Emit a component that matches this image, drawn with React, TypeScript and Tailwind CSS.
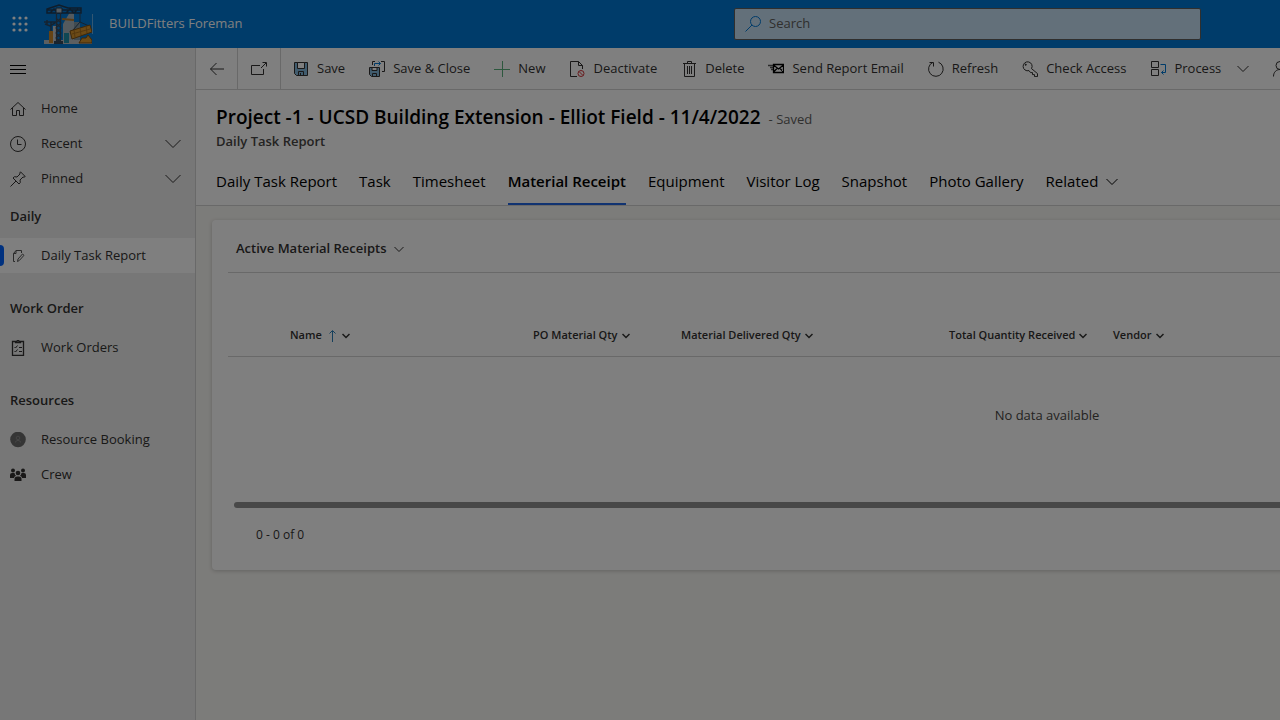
import type { ReactNode } from "react";
import clsx from "clsx";

function Icon({ size = 16, children }: { size?: number; children: ReactNode }) {
  return (
    <svg
      width={size}
      height={size}
      viewBox="0 0 16 16"
      fill="none"
      stroke="currentColor"
      strokeWidth={1}
      className="shrink-0"
      aria-hidden="true"
    >
      {children}
    </svg>
  );
}

function Chevron({ width = 12, stroke = 1 }: { width?: number; stroke?: number }) {
  return (
    <svg
      width={width}
      height={width / 2 + 2}
      viewBox={`0 0 ${width} ${width / 2 + 2}`}
      fill="none"
      stroke="currentColor"
      strokeWidth={stroke}
      className="shrink-0"
      aria-hidden="true"
    >
      <path d={`M.5 1 ${width / 2} ${width / 2 + 0.5} ${width - 0.5} 1`} />
    </svg>
  );
}

function Logo() {
  return (
    <svg width="48" height="40" viewBox="0 0 48 40" className="shrink-0" aria-hidden="true">
      <path d="M19 20l7-12 4 2v30H19z" fill="#a9b4bc" />
      <path d="M30 18h6v22h-6z" fill="#8296a3" />
      <path d="M0 36h48v4H0z" fill="#b9bec2" />
      <path d="M5 27h4v12H5z" fill="#c9862a" />
      <path d="M9 22h3v17H9z" fill="#c5c9cc" />
      <path d="M20 29h5v10h-5z" fill="#1f8fa8" />
      <path d="M18 15l12 1" stroke="#b87a2b" strokeWidth="2" />
      <path
        d="M3 6h34M6 4l9-3 9 3h13v5H3V5zM6 9l4-4 4 4M22 9l4-4 4 4 4-4"
        fill="none"
        stroke="#1e3a55"
        strokeWidth="1.5"
      />
      <path d="M12 4h6v5h-6z" fill="#a9b7c2" stroke="#1e3a55" />
      <path
        d="M12.500 9v29M16.500 9v29M12 14l5 5-5 5 5 5-5 5 5 4M17 14l-5 5 5 5-5 5 5 5-5 4"
        fill="none"
        stroke="#35495c"
        strokeWidth="1.200"
      />
      <path d="M10 37h9v3h-9z" fill="#35495c" />
      <path d="M0 18h12M3 16v5M7 18v9M1 20l5 2 5-3" fill="none" stroke="#2b4660" strokeWidth="1.500" />
      <path d="M36 9v9l-7 8M36 18l9 4" fill="none" stroke="#2b4660" />
      <path d="M26 27l20-6 2 7-20 7z" fill="#d8942c" stroke="#7d4f12" />
      <path d="M28 30l18-5M30 26l1 7M36 24l1 7M42 22l1 7" stroke="#a86f1e" />
      <path d="M35 39l3-5h4l2-3 4 5v3z" fill="#d8942c" stroke="#7d4f12" />
    </svg>
  );
}

const commands: { label: string; icon: ReactNode; menu?: boolean }[] = [
  {
    label: "Save",
    icon: (
      <Icon>
        <path d="M1.500 1.500h13v13h-11l-2-2z" fill="#83b9dc" />
        <path d="M4.500 1.500h7v6h-7z" fill="#fff" />
        <path d="M5.500 14.500v-4h5v4M7.500 12v2" fill="none" />
      </Icon>
    ),
  },
  {
    label: "Save & Close",
    icon: (
      <Icon>
        <path d="M.5 6.500h10v9h-8l-2-2z" fill="#83b9dc" />
        <path d="M3 6.500h5v3H3z" fill="#fff" />
        <path d="M3.500 15.500v-3h4v3M3.500 4V.5H6M12 .5h3.500v10H13" />
        <path d="M5.500 5V2.500h6M9.500.5l2 2-2 2" stroke="#0078d4" />
      </Icon>
    ),
  },
  {
    label: "New",
    icon: (
      <Icon>
        <path d="M8.500 0v16M0 8.500h16" stroke="#5bb07c" />
      </Icon>
    ),
  },
  {
    label: "Deactivate",
    icon: (
      <Icon>
        <path d="M8 15.500H1.500V.5h8l4 4V8M9.500.5v4h4" />
        <circle cx="12" cy="12.500" r="3" stroke="#d13438" />
        <path d="M10 10.500l4 4" stroke="#d13438" />
      </Icon>
    ),
  },
  {
    label: "Delete",
    icon: (
      <Icon>
        <path d="M2 2.500h13M6.500 2.500v-2h4v2M3.500 2.500v13h10v-13M6.500 5v8M8.500 5v8M10.500 5v8" />
      </Icon>
    ),
  },
  {
    label: "Send Report Email",
    icon: (
      <Icon>
        <path d="M0 4.500h6M2 6.500h4M3 8.500h3" stroke="#555" strokeWidth="1.500" />
        <path d="M5.500 3.500h10v8h-10zM5.500 4l5 4 5-4M5.500 11l4-4M15.500 11l-4-4" stroke="#000" strokeWidth="1.300" />
      </Icon>
    ),
  },
  {
    label: "Refresh",
    icon: (
      <Icon>
        <path d="M10.500 1.200A7.300 7.300 0 1 1 5 1.300M1.500 1.500H5.500v4" />
      </Icon>
    ),
  },
  {
    label: "Check Access",
    icon: (
      <Icon>
        <path d="M9.500 7.600l6 5v3h-3v-2h-2v-2h-2l-1.500-2A4.500 4.500 0 1 1 9.500 7.600z" />
        <circle cx="3.700" cy="3.700" r=".6" fill="currentColor" />
      </Icon>
    ),
  },
  {
    label: "Process",
    menu: true,
    icon: (
      <Icon>
        <path d="M1.500.5h7v6h-7zM1.500 8.500h7v6h-7z" />
        <path d="M10.500 3.500h5v8h-4M13.500 9.500l-2 2 2 2" stroke="#0078d4" />
      </Icon>
    ),
  },
];

const tabs = [
  "Daily Task Report",
  "Task",
  "Timesheet",
  "Material Receipt",
  "Equipment",
  "Visitor Log",
  "Snapshot",
  "Photo Gallery",
];

function NavItem({
  label,
  icon,
  active,
  expandable,
}: {
  label: string;
  icon: ReactNode;
  active?: boolean;
  expandable?: boolean;
}) {
  return (
    <li>
      <a
        href="#"
        className={clsx(
          "relative flex h-[35px] items-center pr-3.5 pl-2.5 text-[#323130]",
          active && "bg-white"
        )}
      >
        {active && <span className="absolute top-[7px] left-0 h-[21px] w-1 rounded-r-sm bg-[#0063ff]" />}
        {icon}
        <span className="ml-[15px] flex-1">{label}</span>
        {expandable && <Chevron width={16} />}
      </a>
    </li>
  );
}

function NavGroup({ title, children }: { title: string; children: ReactNode }) {
  return (
    <section className="mb-[15px]">
      <h2 className="flex h-[42px] items-center px-2.5 font-semibold text-[#323130]">{title}</h2>
      <ul>{children}</ul>
    </section>
  );
}

function Sidebar() {
  return (
    <nav className="w-[196px] shrink-0 border-r border-[#d2d2d2] bg-[#efefef]">
      <button className="flex h-[43px] w-full items-center px-2.5 text-black" aria-label="Site map">
        <Icon>
          <path d="M0 3.500h16M0 7.500h16M0 11.500h16" />
        </Icon>
      </button>
      <ul>
        <NavItem
          label="Home"
          icon={
            <Icon>
              <path d="M.5 8.500 8 1.500l7.500 7M2.500 7v7.500h4v-5h3v5h4V7" />
            </Icon>
          }
        />
        <NavItem
          label="Recent"
          expandable
          icon={
            <Icon>
              <circle cx="8" cy="8" r="7.500" />
              <path d="M7.500 3.500v5h4" />
            </Icon>
          }
        />
        <NavItem
          label="Pinned"
          expandable
          icon={
            <Icon>
              <path d="M10.500.8l4.700 4.700-1.200.7-1-.2-3 3 .3 2.500-1.300 1.500L3 7l1.500-1.300L7 6l3-3-.2-1zM6 10 .5 15.500" />
            </Icon>
          }
        />
      </ul>
      <NavGroup title="Daily">
        <NavItem
          label="Daily Task Report"
          active
          icon={
            <Icon>
              <path d="M5 13.500H3.500V5.500l2.500-3h5.500V5M3.500 5.500H6v-3" stroke="#555" />
              <path d="M7.500 13.500l.5-2.500 4.500-5 1.500 1.300-4.500 5z" stroke="#555" />
            </Icon>
          }
        />
      </NavGroup>
      <NavGroup title="Work Order">
        <NavItem
          label="Work Orders"
          icon={
            <Icon>
              <path d="M5 1.500H2.500v14h11v-14H11M5.500 2.500h5v-1H9.500l-1-1h-1l-1 1h-1z" strokeWidth="1.300" />
              <path d="M4.500 7l1 1 2-2.500M4.500 11l1 1 2-2.500M9 7.500h3M9 11.500h3" />
            </Icon>
          }
        />
      </NavGroup>
      <NavGroup title="Resources">
        <NavItem
          label="Resource Booking"
          icon={
            <Icon>
              <circle cx="8" cy="7.500" r="7.800" fill="#6b6b6b" stroke="none" />
              <circle cx="8" cy="6" r="1.800" stroke="#8a8a8a" />
              <path d="M5.500 10.500V9.500q2.500-2.500 5 0v1" stroke="#8a8a8a" />
            </Icon>
          }
        />
        <NavItem
          label="Crew"
          icon={
            <Icon>
              <g fill="#323130" stroke="none">
                <circle cx="3" cy="3.500" r="2" />
                <circle cx="13" cy="3.500" r="2" />
                <circle cx="8" cy="6" r="2.300" />
                <path d="M0 11V8q0-2 2-2h2.500q.3 2 1.500 2.800Q4 9.500 4 11zM16 11V8q0-2-2-2h-2.500q-.3 2-1.500 2.800 2 .7 2 2.200zM4.500 14v-2.500Q5 9.500 7 9.500h2q2 0 2.500 2V14z" />
              </g>
            </Icon>
          }
        />
      </NavGroup>
    </nav>
  );
}

function CommandBar() {
  return (
    <div className="flex h-[42px] items-stretch border-b border-[#d2d2d2] text-[#323130]">
      <button className="flex w-[42px] shrink-0 items-center justify-center border-r border-[#d2d2d2]" aria-label="Back">
        <Icon>
          <path d="M7.500 2 1.500 8l6 6M1.500 8H15" />
        </Icon>
      </button>
      <button
        className="flex w-[43px] shrink-0 items-center justify-center border-r border-[#d2d2d2]"
        aria-label="Open in new window"
      >
        <Icon>
          <path d="M9 4.500H.5v9h12V8M10 7l5-5M11.500 1.500h4v4" />
        </Icon>
      </button>
      {commands.map((command) => (
        <button key={command.label} className="flex shrink-0 items-center gap-2 px-3">
          {command.icon}
          <span>{command.label}</span>
          {command.menu && (
            <span className="ml-2">
              <Chevron />
            </span>
          )}
        </button>
      ))}
      <button className="flex shrink-0 items-center px-3" aria-label="Assign">
        <Icon>
          <circle cx="7" cy="4.500" r="4" />
          <path d="M.5 15.500C.5 11 3.500 8.500 7 8.500s6.500 2.500 6.500 7" />
        </Icon>
      </button>
    </div>
  );
}

function ColumnHeader({ label, className, sorted }: { label: string; className: string; sorted?: boolean }) {
  return (
    <th className={clsx("p-0 text-left font-semibold", className)}>
      <button className="flex items-center gap-1">
        {label}
        {sorted && (
          <svg width="12" height="12" viewBox="0 0 12 12" fill="none" stroke="#2b7fb8" aria-hidden="true">
            <path d="M6.500 12V1M3.500 3.500l3-3 3 3" />
          </svg>
        )}
        <Chevron width={8} stroke={1.5} />
      </button>
    </th>
  );
}

function MaterialReceipts() {
  return (
    <section className="w-[1670px] rounded bg-white px-4 pb-6 shadow-[0_1px_4px_rgba(0,0,0,0.2)]">
      <button className="flex h-[52px] items-center gap-2 pt-1.5 pl-2 font-semibold text-[#323130]">
        Active Material Receipts
        <Chevron width={10} />
      </button>
      <table className="w-full table-fixed border-t border-[#d2d2d2] text-[11px] text-[#323130]">
        <thead>
          <tr className="h-[84px] border-b border-[#d2d2d2]">
            <th className="w-[62px]" aria-label="Select" />
            <ColumnHeader label="Name" className="w-[243px] pt-[42px]" sorted />
            <ColumnHeader label="PO Material Qty" className="w-[148px] pt-[42px]" />
            <ColumnHeader label="Material Delivered Qty" className="w-[268px] pt-[42px]" />
            <ColumnHeader label="Total Quantity Received" className="w-[164px] pt-[42px]" />
            <ColumnHeader label="Vendor" className="pt-[42px]" />
          </tr>
        </thead>
        <tbody>
          <tr>
            <td colSpan={6} className="h-[117px] p-0 text-center text-[13px] text-[#484644]">
              No data available
            </td>
          </tr>
        </tbody>
      </table>
      <div className="mt-7 ml-1.5 h-1.5 rounded-full bg-[#919191]" />
      <p className="pt-[17px] pb-px pl-7 text-xs leading-5 text-[#323130]">0 - 0 of 0</p>
    </section>
  );
}

export default function App() {
  return (
    <div className="flex h-screen flex-col overflow-hidden font-['Open_Sans',sans-serif] text-[13px]">
      <header className="flex h-12 shrink-0 items-center bg-[#0078d4] text-white">
        <button className="ml-[11px] p-px" aria-label="App launcher">
          <svg width="16" height="16" viewBox="0 0 16 16" fill="currentColor" aria-hidden="true">
            {[2, 8, 14].map((y) => [2, 8, 14].map((x) => <circle key={`${x}-${y}`} cx={x} cy={y} r="1.600" />))}
          </svg>
        </button>
        <span className="ml-[15px] flex items-center">
          <Logo />
          <span className="h-5 w-px bg-white/40" />
        </span>
        <a href="#" className="ml-4">
          BUILDFitters Foreman
        </a>
        <label className="mr-[79px] ml-auto flex h-8 w-[467px] items-center gap-2 rounded-xs border border-[#605e5c] bg-[#c7e0f4] px-2.5 text-[#0078d4]">
          <Icon>
            <circle cx="10.500" cy="5.500" r="5" />
            <path d="M7 9 .5 15.500" />
          </Icon>
          <input
            type="search"
            placeholder="Search"
            aria-label="Search"
            className="w-full bg-transparent outline-none placeholder:text-[#605e5c]"
          />
        </label>
      </header>

      <div className="flex min-h-0 flex-1">
        <Sidebar />
        <main className="min-w-0 flex-1 overflow-hidden bg-[#f9f8f4]">
          <div className="border-b border-[#d2d2d2] bg-white">
            <CommandBar />
            <div className="px-5 pt-[15px]">
              <div className="flex items-baseline gap-2 leading-6">
                <h1 className="text-[19px] leading-6 font-semibold text-black">
                  Project -1 - UCSD Building Extension - Elliot Field - 11/4/2022
                </h1>
                <span className="text-[#605e5c]">- Saved</span>
              </div>
              <p className="leading-5 font-semibold text-[#484644]">Daily Task Report</p>
            </div>
            <div role="tablist" className="mt-[9px] flex gap-[22px] px-5 text-[15px] text-black">
              {tabs.map((tab) => (
                <button
                  key={tab}
                  role="tab"
                  aria-selected={tab === "Material Receipt"}
                  className={clsx(
                    "h-[45px] shrink-0 border-b-2",
                    tab === "Material Receipt" ? "border-[#2266e3] font-semibold" : "border-transparent"
                  )}
                >
                  {tab}
                </button>
              ))}
              <button
                role="tab"
                aria-selected={false}
                className="flex h-[45px] shrink-0 items-center gap-2 border-b-2 border-transparent"
              >
                Related
                <Chevron />
              </button>
            </div>
          </div>
          <div className="px-4 pt-3.5">
            <MaterialReceipts />
          </div>
        </main>
      </div>

      {/* modal backdrop */}
      <div className="pointer-events-none fixed inset-0 bg-black/50" />
    </div>
  );
}
